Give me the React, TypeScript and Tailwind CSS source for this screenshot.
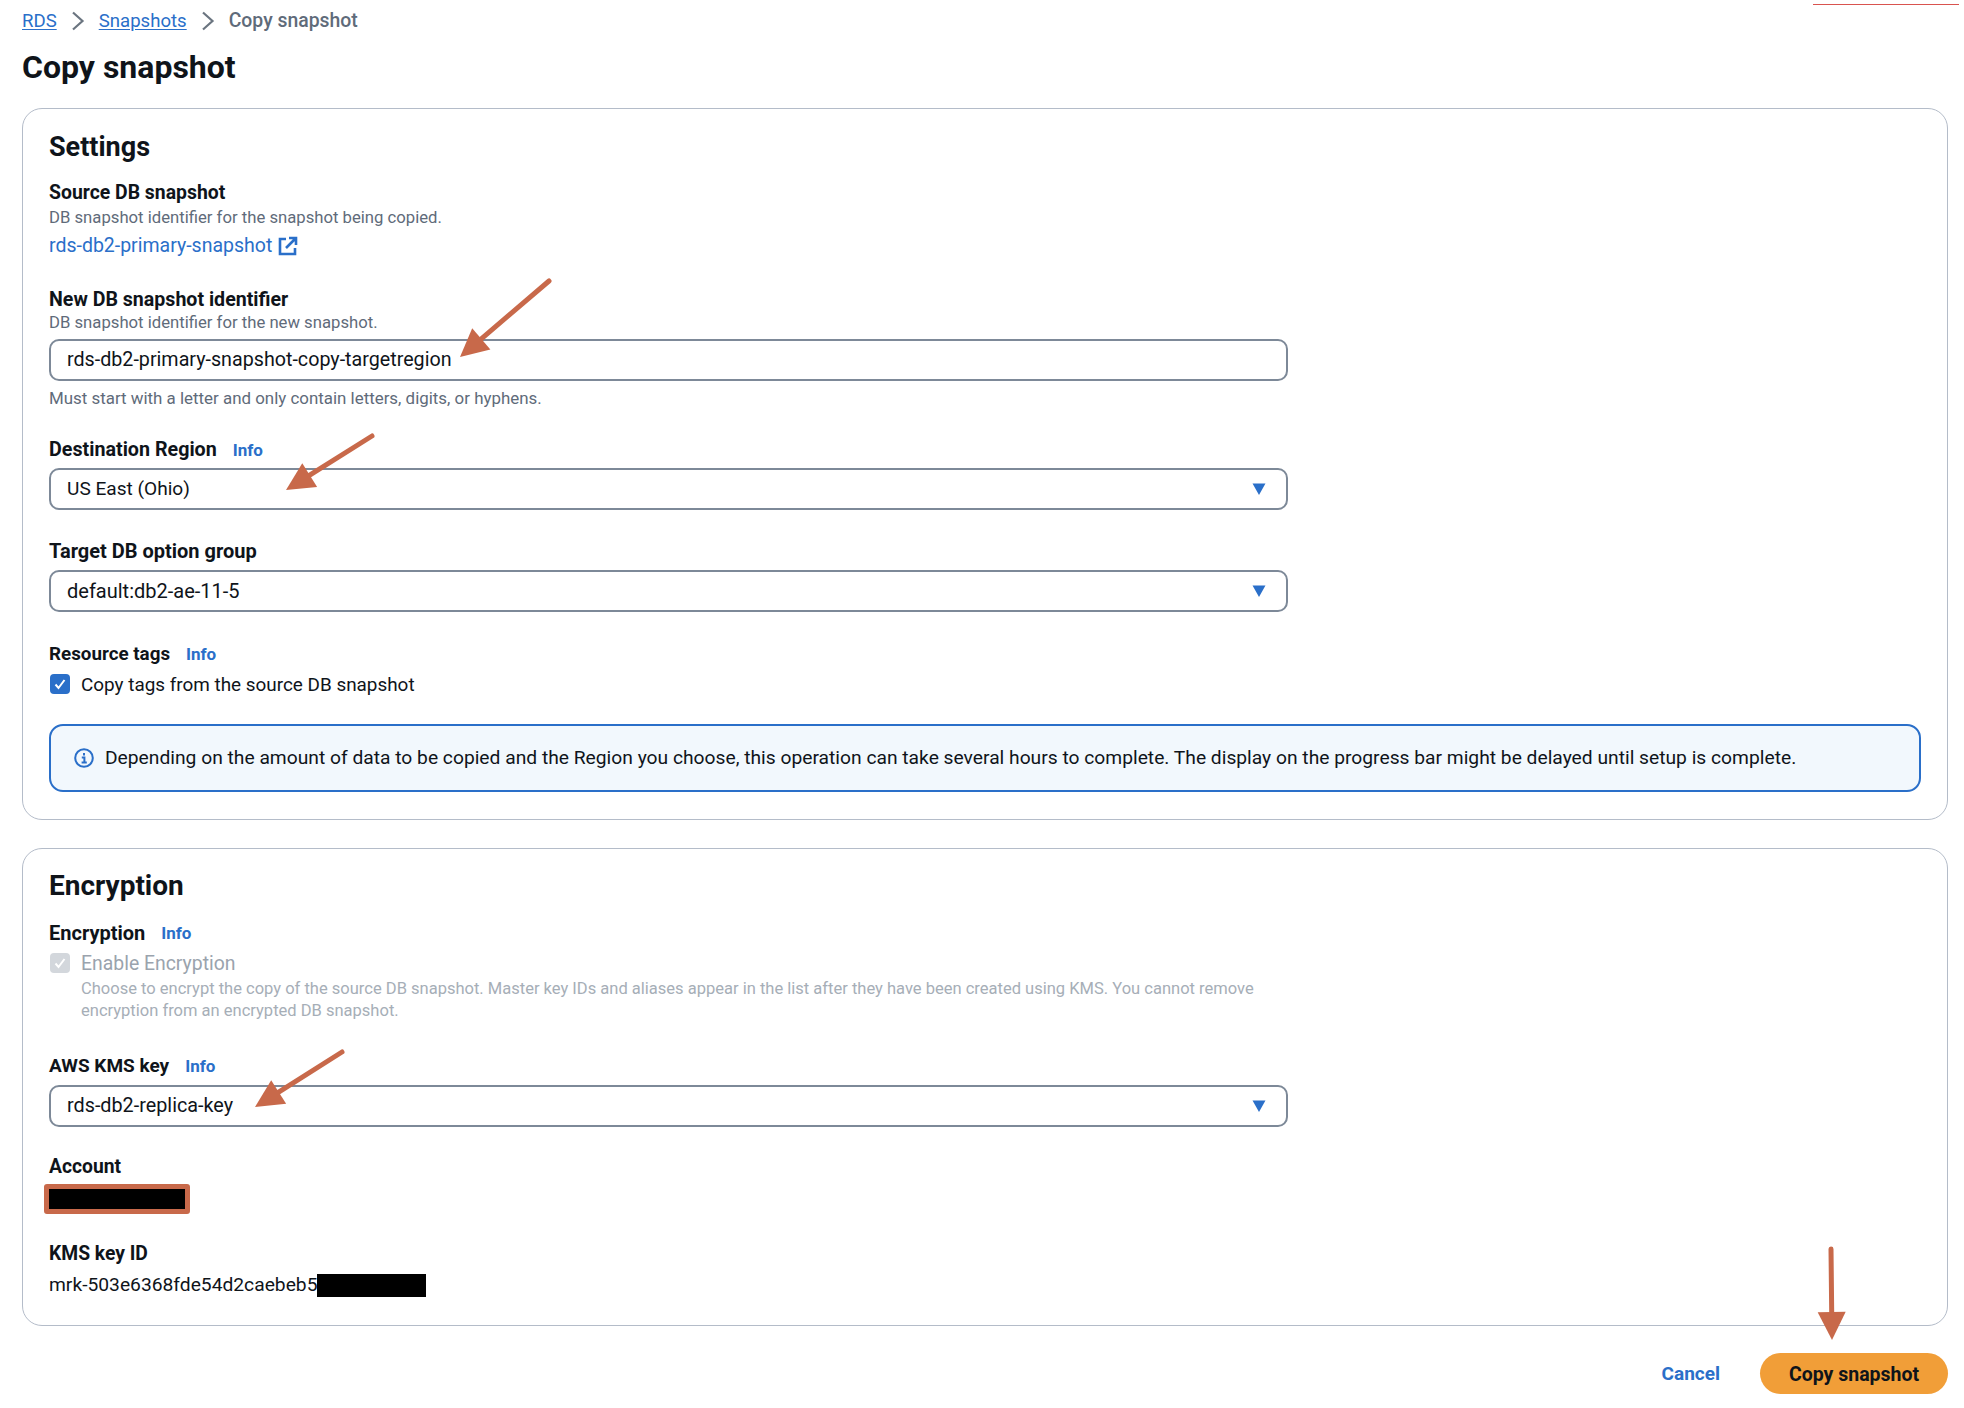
import React from 'react';

const Chevron = () => (
  <svg width="14" height="20" viewBox="0 0 14 20" fill="none" className="mx-[14px]">
    <path d="M2 1.5l9.5 8.5L2 18.5" stroke="#6b7580" strokeWidth="2.2" />
  </svg>
);

const Caret = () => (
  <svg width="14" height="14" viewBox="0 0 14 14">
    <path d="M0.5 1.5h13L7 13z" fill="#2a6fc9" />
  </svg>
);

const Info = () => <span className="ml-4 text-[17px] font-bold text-[#2a6fc9] leading-6">Info</span>;

function Label({ children, info, className, size = 'text-[19.6px]' }: { children: React.ReactNode; info?: boolean; className: string; size?: string }) {
  return (
    <div className={`flex items-center h-6 pt-[2px] font-bold leading-6 text-[#0f141a] ${size} ${className}`}>
      {children}
      {info && <Info />}
    </div>
  );
}

function Select({ value, className, size = 'text-[19.8px]' }: { value: string; className: string; size?: string }) {
  return (
    <div className={`flex items-center justify-between w-[1239px] h-[42px] border-2 border-[#7d8998] rounded-[10px] pl-[16px] pr-[20px] text-[#0f141a] ${size} ${className}`}>
      <span>{value}</span>
      <Caret />
    </div>
  );
}

function Check({ disabled }: { disabled?: boolean }) {
  return (
    <span className={`flex items-center justify-center w-5 h-5 rounded-[4px] ${disabled ? 'bg-[#d3d7dc]' : 'bg-[#2a6fc9]'}`}>
      <svg width="14" height="14" viewBox="0 0 14 14" fill="none">
        <path d="M2.5 7.5l3 3.5 6-8" stroke="white" strokeWidth="2" />
      </svg>
    </span>
  );
}

function Arrow({ x1, y1, x2, y2 }: { x1: number; y1: number; x2: number; y2: number }) {
  // shaft stops at the head, head is a plain triangle
  const len = Math.hypot(x2 - x1, y2 - y1);
  const ux = (x2 - x1) / len;
  const uy = (y2 - y1) / len;
  const bx = x2 - ux * 28;
  const by = y2 - uy * 28;
  const px = -uy * 14;
  const py = ux * 14;
  return (
    <g>
      <line x1={x1} y1={y1} x2={bx} y2={by} stroke="#c8694a" strokeWidth="5" strokeLinecap="round" />
      <polygon points={`${x2},${y2} ${bx + px},${by + py} ${bx - px},${by - py}`} fill="#c8694a" />
    </g>
  );
}

export default function App() {
  return (
    <div className="relative min-h-screen bg-white pl-[22px] pr-4 pt-[9px] text-[#0f141a] font-['Roboto',sans-serif]">
      {/* breadcrumb */}
      <div className="flex items-center h-6 text-[18.6px] leading-6">
        <a className="text-[#2a6fc9] underline underline-offset-2">RDS</a>
        <Chevron />
        <a className="text-[#2a6fc9] underline underline-offset-2">Snapshots</a>
        <Chevron />
        <span className="text-[19.4px] font-medium text-[#5f6b7a]">Copy snapshot</span>
      </div>
      <h1 className="mt-[14px] h-10 text-[32px] leading-10 font-bold text-[#0f141a]">Copy snapshot</h1>

      {/* settings */}
      <section className="mt-[21px] border border-[#b4bcc9] rounded-[20px] pl-[26px] pr-[26px] pt-[21px] pb-[27px]">
        <h2 className="h-[34px] text-[27px] leading-[34px] font-bold">Settings</h2>
        <Label className="mt-4" size="text-[19.4px]">Source DB snapshot</Label>
        <p className="mt-[4px] h-5 text-[16.7px] leading-5 text-[#5f6b7a]">DB snapshot identifier for the snapshot being copied.</p>
        <div className="mt-[5px] flex items-center h-6 text-[19.5px] text-[#2a6fc9]">
          <span className="mt-[2px]">rds-db2-primary-snapshot</span>
          <svg className="ml-[6px] mt-[2px]" width="20" height="20" viewBox="0 0 20 20" fill="none" stroke="#2a6fc9" strokeWidth="2.6">
            <path d="M8 3H2v15h15v-6" />
            <path d="M11 2h7v7M18 2L8 12" />
          </svg>
        </div>

        <Label className="mt-[30px]">New DB snapshot identifier</Label>
        <p className="mt-[2px] h-5 text-[16.7px] leading-5 text-[#5f6b7a]">DB snapshot identifier for the new snapshot.</p>
        <div className="mt-[6px] flex items-center w-[1239px] h-[42px] border-2 border-[#7d8998] rounded-[10px] pl-[16px] text-[19.7px]">
          rds-db2-primary-snapshot-copy-targetregion
        </div>
        <p className="mt-[7px] h-5 text-[16.9px] leading-5 text-[#5f6b7a]">Must start with a letter and only contain letters, digits, or hyphens.</p>

        <Label info className="mt-[29px]" size="text-[19.7px]">Destination Region</Label>
        <Select className="mt-[7px]" size="text-[19.1px]" value="US East (Ohio)" />

        <Label className="mt-[28px]" size="text-[20px]">Target DB option group</Label>
        <Select className="mt-2" size="text-[20px]" value="default:db2-ae-11-5" />

        <Label info className="mt-[29px]" size="text-[18.8px]">Resource tags</Label>
        <div className="mt-[7px] flex items-center h-6 text-[18.9px]">
          <span className="ml-px mr-[11px]"><Check /></span>
          <span className="mt-[2px]">Copy tags from the source DB snapshot</span>
        </div>

        <div className="mt-[28px] flex items-center h-[68px] border-2 border-[#2a6fc9] rounded-[14px] bg-[#f2f8fd] pl-[23px] text-[19.24px]">
          <svg className="mr-[11px]" width="20" height="20" viewBox="0 0 20 20" fill="none">
            <circle cx="10" cy="10" r="8.8" stroke="#2a6fc9" strokeWidth="2" />
            <path d="M10 5v2.4M7.8 9.4H10.4V14.6M7.6 14.6h5.2" stroke="#2a6fc9" strokeWidth="2" />
          </svg>
          Depending on the amount of data to be copied and the Region you choose, this operation can take several hours to complete. The display on the progress bar might be delayed until setup is complete.
        </div>
      </section>

      {/* encryption */}
      <section className="mt-[28px] border border-[#b4bcc9] rounded-[20px] pl-[26px] pr-[26px] pt-[20px] pb-[28px]">
        <h2 className="h-[34px] text-[28px] leading-[34px] font-bold">Encryption</h2>
        <Label info className="mt-[17px]" size="text-[20px]">Encryption</Label>
        <div className="mt-[7px] flex items-center h-6 text-[19.4px] text-[#9aa3ad]">
          <span className="ml-px mr-[11px]"><Check disabled /></span>
          <span className="mt-[2px]">Enable Encryption</span>
        </div>
        <p className="mt-[3px] ml-[32px] w-[1200px] text-[16.53px] leading-[22px] text-[#a6aeb7]">
          Choose to encrypt the copy of the source DB snapshot. Master key IDs and aliases appear in the list after they have been created using KMS. You cannot remove encryption from an encrypted DB snapshot.
        </p>

        <Label info className="mt-[31px]" size="text-[19px]">AWS KMS key</Label>
        <Select className="mt-2" value="rds-db2-replica-key" />

        <Label className="mt-[27px]" size="text-[19.3px]">Account</Label>
        <div className="mt-[6px] -ml-[5px] w-[146px] h-[30px] bg-black border-[5px] border-[#c8694a] rounded-[3px]" />

        <Label className="mt-[27px]" size="text-[19.3px]">KMS key ID</Label>
        <div className="mt-2 flex items-center h-6 text-[19.24px]">
          mrk-503e6368fde54d2caebeb5
          <span className="w-[109px] h-[23px] bg-black" />
        </div>
      </section>

      {/* footer */}
      <div className="mt-[27px] flex items-center justify-end gap-10">
        <a className="pt-[2px] text-[19px] font-bold text-[#2a6fc9]">Cancel</a>
        <button className="w-[188px] h-[41px] pt-[2px] rounded-full bg-[#f19e38] text-[19.5px] font-bold text-[#0f141a]">Copy snapshot</button>
      </div>

      {/* red line on the top right edge of the shot */}
      <div className="absolute left-[1813px] top-1 w-[146px] h-px bg-[#d9534f]" />

      {/* annotation arrows */}
      <svg className="absolute left-0 top-0 pointer-events-none" width="1964" height="1408">
        <Arrow x1={549} y1={281} x2={460} y2={357} />
        <Arrow x1={372} y1={436} x2={286} y2={490} />
        <Arrow x1={342} y1={1052} x2={255} y2={1107} />
        <Arrow x1={1831} y1={1249} x2={1832} y2={1340} />
      </svg>
    </div>
  );
}
